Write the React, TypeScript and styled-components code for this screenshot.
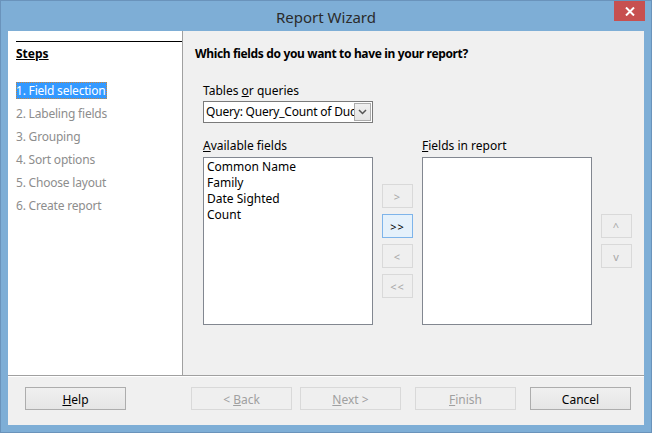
import React from "react";
import styled, { createGlobalStyle, css } from "styled-components";

const Global = createGlobalStyle`
  html, body { margin: 0; padding: 0; background: #ffffff; }
  body { font-family: "Noto Sans", "Open Sans", sans-serif; font-size: 12px; }
  * { box-sizing: border-box; }
`;

const Frame = styled.div`
  width: 652px;
  height: 433px;
  background: #7eaed6;
  border: 1px solid #6a93bb;
  display: flex;
  flex-direction: column;
`;

const TitleBar = styled.div`
  height: 30px;
  display: grid;
  grid-template-columns: 1fr auto 1fr;
  align-items: start;
`;

const Title = styled.div`
  grid-column: 2;
  font-family: "Noto Sans", sans-serif;
  font-size: 15px;
  color: #2b2b2b;
  line-height: 30px;
  padding-top: 1px;
`;

const CloseButton = styled.div`
  grid-column: 3;
  justify-self: end;
  width: 31px;
  height: 20px;
  margin-right: 6px;
  background: #c75050;
  display: flex;
  align-items: center;
  justify-content: center;
`;

const Client = styled.div`
  margin: 0 7px 7px 7px;
  flex: 1;
  display: flex;
  flex-direction: column;
  background: #f0f0f0;
`;

const Main = styled.div`
  height: 345px;
  display: flex;
  border-bottom: 1px solid #a0a0a0;
`;

const StepsPanel = styled.div`
  width: 175px;
  background: #ffffff;
  border-right: 1px solid #a0a0a0;
  padding: 10px 0 0 8px;
  display: flex;
  flex-direction: column;
`;

const StepsHeader = styled.div`
  border-top: 1px solid #000000;
  font-weight: bold;
  text-decoration: underline;
  color: #000;
  line-height: 16px;
  padding-top: 4px;
  margin-bottom: 20px;
`;

const StepList = styled.div`
  display: flex;
  flex-direction: column;
  gap: 6px;
  align-items: flex-start;
`;

const Step = styled.div<{ $active?: boolean }>`
  height: 17px;
  line-height: 17px;
  padding: 0 1px 0 0;
  color: #8d8d8d;
  letter-spacing: -0.2px;
  ${(p) =>
    p.$active &&
    css`
      background: #3399ff;
      color: #ffffff;
      outline: 1px dotted #c9853a;
      outline-offset: -1px;
    `}
`;

const ContentPanel = styled.div`
  flex: 1;
  padding: 10px 0 0 12px;
  display: flex;
  flex-direction: column;
`;

const Heading = styled.div`
  font-weight: bold;
  color: #000;
  line-height: 16px;
  padding-top: 5px;
  margin-bottom: 21px;
  letter-spacing: -0.35px;
`;

const Body = styled.div`
  padding-left: 8px;
  display: flex;
  flex-direction: column;
`;

const Label = styled.div`
  line-height: 16px;
  color: #000;
  height: 16px;
`;

const U = styled.span`
  text-decoration: underline;
`;

const Select = styled.div`
  margin-top: 2px;
  width: 170px;
  height: 22px;
  background: #fff;
  border: 1px solid #7a7a7a;
  display: flex;
  align-items: center;
  overflow: hidden;
`;

const SelectText = styled.div`
  flex: 1;
  white-space: nowrap;
  overflow: hidden;
  padding-left: 2px;
  color: #000;
  line-height: 18px;
  letter-spacing: -0.2px;
`;

const SelectArrow = styled.div`
  width: 17px;
  height: 18px;
  margin-right: 1px;
  border: 1px solid #acacac;
  background: linear-gradient(#f0f0f0, #e5e5e5);
  display: flex;
  align-items: center;
  justify-content: center;
`;

const FieldsGrid = styled.div`
  margin-top: 15px;
  display: grid;
  grid-template-columns: 170px 31px 170px 31px;
  grid-template-rows: 16px 168px;
  column-gap: 9px;
  row-gap: 3px;
`;

const ListBox = styled.div`
  background: #ffffff;
  border: 1px solid #828790;
  padding: 1px 3px;
  display: flex;
  flex-direction: column;
`;

const ListItem = styled.div`
  line-height: 16px;
  color: #000;
`;

const ButtonColumn = styled.div<{ $top: number }>`
  padding-top: ${(p) => p.$top}px;
  display: flex;
  flex-direction: column;
  gap: 6px;
`;

const SmallButton = styled.div<{ $focused?: boolean }>`
  width: 31px;
  height: 24px;
  border: 1px solid #d9d9d9;
  background: #efefef;
  color: #a8a8a8;
  font-size: 11px;
  display: flex;
  align-items: center;
  justify-content: center;
  letter-spacing: 1px;
  ${(p) =>
    p.$focused &&
    css`
      border-color: #7eb4ea;
      background: #e5f1fb;
      color: #000;
    `}
`;

const Footer = styled.div`
  flex: 1;
  border-top: 1px solid #ffffff;
  display: flex;
  padding: 10px 0 0 17px;
  align-items: flex-start;
`;

const Button = styled.div<{ $disabled?: boolean; $ml: number }>`
  margin-left: ${(p) => p.$ml}px;
  width: 101px;
  height: 23px;
  border: 1px solid #adadad;
  background: linear-gradient(#f0f0f0, #e5e5e5);
  color: #000;
  display: flex;
  align-items: center;
  justify-content: center;
  line-height: 16px;
  padding-top: 2px;
  ${(p) =>
    p.$disabled &&
    css`
      border-color: #d9d9d9;
      background: #efefef;
      color: #a0a0a0;
    `}
`;

export default function App() {
  return (
    <>
      <Global />
      <Frame>
        <TitleBar>
          <Title>Report Wizard</Title>
          <CloseButton>
            <svg width="10" height="9" viewBox="0 0 10 9">
              <path d="M1 0.5 L9 8.5 M9 0.5 L1 8.5" stroke="#ffffff" strokeWidth="2" />
            </svg>
          </CloseButton>
        </TitleBar>
        <Client>
          <Main>
            <StepsPanel>
              <StepsHeader>Steps</StepsHeader>
              <StepList>
                <Step $active>1. Field selection</Step>
                <Step>2. Labeling fields</Step>
                <Step>3. Grouping</Step>
                <Step>4. Sort options</Step>
                <Step>5. Choose layout</Step>
                <Step>6. Create report</Step>
              </StepList>
            </StepsPanel>
            <ContentPanel>
              <Heading>Which fields do you want to have in your report?</Heading>
              <Body>
                <Label>
                  Tables <U>o</U>r queries
                </Label>
                <Select>
                  <SelectText>Query: Query_Count of Ducks</SelectText>
                  <SelectArrow>
                    <svg width="9" height="6" viewBox="0 0 9 6">
                      <path d="M1 1 L4.5 4.5 L8 1" stroke="#555" strokeWidth="1.5" fill="none" />
                    </svg>
                  </SelectArrow>
                </Select>
                <FieldsGrid>
                  <Label>
                    <U>A</U>vailable fields
                  </Label>
                  <span />
                  <Label>
                    <U>F</U>ields in report
                  </Label>
                  <span />
                  <ListBox>
                    <ListItem>Common Name</ListItem>
                    <ListItem>Family</ListItem>
                    <ListItem>Date Sighted</ListItem>
                    <ListItem>Count</ListItem>
                  </ListBox>
                  <ButtonColumn $top={27}>
                    <SmallButton>&gt;</SmallButton>
                    <SmallButton $focused>&gt;&gt;</SmallButton>
                    <SmallButton>&lt;</SmallButton>
                    <SmallButton>&lt;&lt;</SmallButton>
                  </ButtonColumn>
                  <ListBox />
                  <ButtonColumn $top={57}>
                    <SmallButton>^</SmallButton>
                    <SmallButton>v</SmallButton>
                  </ButtonColumn>
                </FieldsGrid>
              </Body>
            </ContentPanel>
          </Main>
          <Footer>
            <Button $ml={0}>
              <span>
                <U>H</U>elp
              </span>
            </Button>
            <Button $ml={65} $disabled>
              <span>
                &lt; <U>B</U>ack
              </span>
            </Button>
            <Button $ml={8} $disabled>
              <span>
                <U>N</U>ext &gt;
              </span>
            </Button>
            <Button $ml={14} $disabled>
              <span>
                <U>F</U>inish
              </span>
            </Button>
            <Button $ml={14}>Cancel</Button>
          </Footer>
        </Client>
      </Frame>
    </>
  );
}
